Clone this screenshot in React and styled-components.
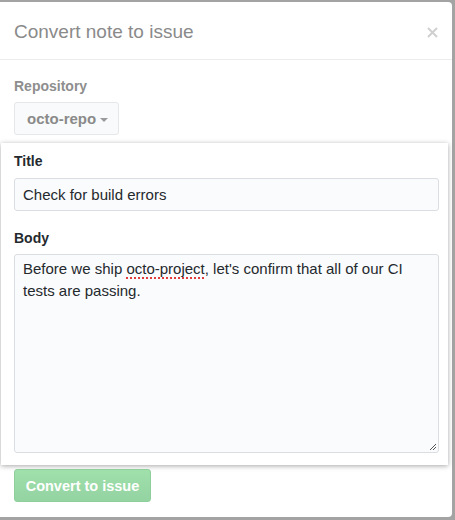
import React from "react";
import styled, { createGlobalStyle } from "styled-components";

const Global = createGlobalStyle`
  html, body { margin: 0; padding: 0; }
  body {
    background: #a3a3a3;
    font-family: "Liberation Sans", Arial, Helvetica, sans-serif;
    -webkit-font-smoothing: antialiased;
  }
`;

const Modal = styled.div`
  box-sizing: border-box;
  width: 452px;
  height: 515px;
  margin-top: 2px;
  background: #fff;
  border-radius: 0 4px 4px 0;
  display: flex;
  flex-direction: column;
`;

const Header = styled.div`
  box-sizing: border-box;
  height: 58px;
  padding: 3px 14px 0;
  border-bottom: 1px solid #ececec;
  display: flex;
  align-items: center;
  justify-content: space-between;
`;

const Heading = styled.h2`
  margin: 0;
  font-size: 19px;
  font-weight: 400;
  color: #8a8a8a;
  line-height: 24px;
`;

const Close = styled.button`
  border: 0;
  background: none;
  padding: 0;
  width: 12px;
  height: 12px;
  display: flex;
  align-items: center;
  justify-content: center;
`;

const Section = styled.div`
  padding: 16px 14px 0;
  display: flex;
  flex-direction: column;
  align-items: flex-start;
`;

const FadedLabel = styled.div`
  font-size: 14px;
  line-height: 20px;
  font-weight: 700;
  color: #8e8e8e;
`;

const RepoButton = styled.button`
  box-sizing: border-box;
  margin-top: 6px;
  height: 33px;
  width: 105px;
  padding: 0 0 0 12px;
  border: 1px solid #e6e7e9;
  border-radius: 3px;
  background: #f9fafb;
  color: #8a8a8a;
  font-family: inherit;
  font-size: 15px;
  font-weight: 700;
  display: flex;
  align-items: center;
  gap: 4px;
`;

const Caret = styled.span`
  width: 0;
  height: 0;
  border-left: 4px solid transparent;
  border-right: 4px solid transparent;
  border-top: 4px solid #9a9a9a;
  margin-top: 2px;
`;

const Card = styled.div`
  box-sizing: border-box;
  margin: 8px 4px 0 1px;
  padding: 8px 9px 12px 13px;
  background: #fff;
  box-shadow: 0 1px 5px rgba(0, 0, 0, 0.35);
  display: flex;
  flex-direction: column;
`;

const Label = styled.div`
  font-size: 14px;
  line-height: 20px;
  font-weight: 700;
  color: #24292e;
  margin-top: ${(p) => p.$gap || 0}px;
`;

const Input = styled.div`
  box-sizing: border-box;
  margin-top: 7px;
  height: 33px;
  padding: 0 8px;
  border: 1px solid #dadde1;
  border-radius: 3px;
  background: #fafbfc;
  color: #24292e;
  font-size: 15px;
  display: flex;
  align-items: center;
`;

const TextArea = styled.div`
  position: relative;
  box-sizing: border-box;
  margin-top: 6px;
  height: 199px;
  padding: 3px 8px;
  border: 1px solid #dadde1;
  border-radius: 3px;
  background: #fafbfc;
  color: #24292e;
  font-size: 15px;
  line-height: 22px;
`;

const Misspelled = styled.span`
  text-decoration: underline dotted #e23b3b;
  text-decoration-thickness: 2px;
  text-underline-offset: 3px;
`;

const Grip = styled.svg`
  position: absolute;
  right: 1px;
  bottom: 1px;
`;

const Footer = styled.div`
  padding: 4px 14px 0;
  display: flex;
`;

const Submit = styled.button`
  box-sizing: border-box;
  width: 137px;
  height: 33px;
  border: 1px solid #8fcf9c;
  border-radius: 3px;
  background: linear-gradient(#9fe0ab, #94d3a2);
  color: #fff;
  font-family: inherit;
  font-size: 14.5px;
  font-weight: 700;
`;

export default function App() {
  return (
    <>
      <Global />
      <Modal>
        <Header>
          <Heading>Convert note to issue</Heading>
          <Close aria-label="Close">
            <svg width="11" height="11" viewBox="0 0 11 11">
              <path d="M1 1L10 10M10 1L1 10" stroke="#d0d0d0" strokeWidth="2" />
            </svg>
          </Close>
        </Header>
        <Section>
          <FadedLabel>Repository</FadedLabel>
          <RepoButton>
            octo-repo
            <Caret />
          </RepoButton>
        </Section>
        <Card>
          <Label>Title</Label>
          <Input>Check for build errors</Input>
          <Label $gap={17}>Body</Label>
          <TextArea>
            Before we ship <Misspelled>octo-project</Misspelled>, let's confirm that all of our CI tests are passing.
            <Grip width="9" height="9" viewBox="0 0 9 9">
              <path d="M8 2L2 8M8 5L5 8" stroke="#555" strokeWidth="1" />
            </Grip>
          </TextArea>
        </Card>
        <Footer>
          <Submit disabled>Convert to issue</Submit>
        </Footer>
      </Modal>
    </>
  );
}
